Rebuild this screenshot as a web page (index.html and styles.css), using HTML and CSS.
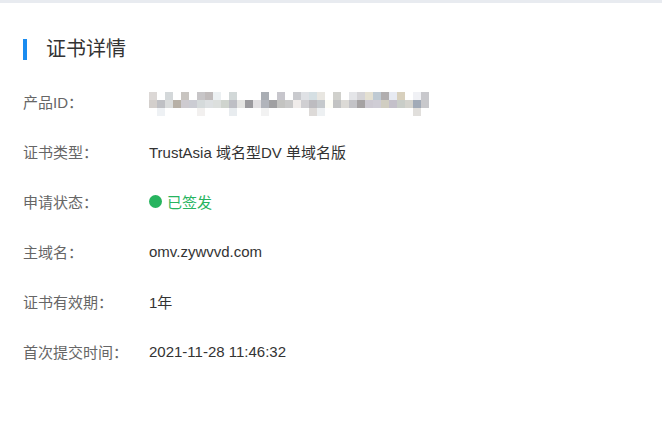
FILE: index.html
```html
<!DOCTYPE html>
<html lang="zh-CN">
<head>
<meta charset="utf-8">
<title>证书详情</title>
<link rel="stylesheet" href="styles.css">
</head>
<body>
<div class="topbar"></div>
<section class="detail">
  <h2 class="title">证书详情</h2>
  <div class="rows">
    <div class="row">
      <span class="label">产品ID：</span>
      <span class="value">
        <svg class="mosaic" width="280" height="24" viewBox="0 0 280 24" aria-label="已打码">
          <g class="r-top">
            <rect x="0" y="0" width="8" height="8" fill="#dcd8d6"/>
            <rect x="16" y="0" width="8" height="8" fill="#d4d8da"/>
            <rect x="32" y="0" width="8" height="8" fill="#c8c4c0"/>
            <rect x="48" y="0" width="8" height="8" fill="#c7c5c7"/>
            <rect x="56" y="0" width="8" height="8" fill="#c0bbbb"/>
            <rect x="64" y="0" width="8" height="8" fill="#ecf0f2"/>
            <rect x="80" y="0" width="8" height="8" fill="#d2d8d8"/>
            <rect x="112" y="0" width="8" height="8" fill="#a9adb3"/>
            <rect x="128" y="0" width="8" height="8" fill="#c7c6cc"/>
            <rect x="144" y="0" width="8" height="8" fill="#c9cace"/>
            <rect x="152" y="0" width="8" height="8" fill="#dfe1e5"/>
            <rect x="160" y="0" width="8" height="8" fill="#d5dfe3"/>
            <rect x="168" y="0" width="8" height="8" fill="#e8e6e1"/>
            <rect x="184" y="0" width="8" height="8" fill="#d0d0cc"/>
            <rect x="200" y="0" width="8" height="8" fill="#e4e5e8"/>
            <rect x="208" y="0" width="8" height="8" fill="#d5d4d7"/>
            <rect x="216" y="0" width="8" height="8" fill="#e4e0d2"/>
            <rect x="224" y="0" width="8" height="8" fill="#bfcad3"/>
            <rect x="232" y="0" width="8" height="8" fill="#b1aeaf"/>
            <rect x="240" y="0" width="8" height="8" fill="#e7eaf2"/>
            <rect x="248" y="0" width="8" height="8" fill="#d8d0bd"/>
            <rect x="264" y="0" width="8" height="8" fill="#f0f1f5"/>
            <rect x="272" y="0" width="8" height="8" fill="#c8c8cc"/>
          </g>
          <g class="r-mid">
            <rect x="0" y="8" width="8" height="8" fill="#d3cfcc"/>
            <rect x="8" y="8" width="8" height="8" fill="#bfc0c4"/>
            <rect x="16" y="8" width="8" height="8" fill="#dadcdc"/>
            <rect x="24" y="8" width="8" height="8" fill="#b7b0a6"/>
            <rect x="32" y="8" width="8" height="8" fill="#cecbd0"/>
            <rect x="40" y="8" width="8" height="8" fill="#cbccd3"/>
            <rect x="48" y="8" width="8" height="8" fill="#d5dadb"/>
            <rect x="56" y="8" width="8" height="8" fill="#dde0e2"/>
            <rect x="64" y="8" width="8" height="8" fill="#dcdfdd"/>
            <rect x="72" y="8" width="8" height="8" fill="#cfd4ce"/>
            <rect x="80" y="8" width="8" height="8" fill="#bebfc5"/>
            <rect x="88" y="8" width="8" height="8" fill="#e4e4e2"/>
            <rect x="96" y="8" width="8" height="8" fill="#9b9a9e"/>
            <rect x="104" y="8" width="8" height="8" fill="#e2e0e2"/>
            <rect x="112" y="8" width="8" height="8" fill="#b1b4bb"/>
            <rect x="120" y="8" width="8" height="8" fill="#a0a0a2"/>
            <rect x="128" y="8" width="8" height="8" fill="#c3c3c1"/>
            <rect x="136" y="8" width="8" height="8" fill="#c9c9c9"/>
            <rect x="144" y="8" width="8" height="8" fill="#f0ecea"/>
            <rect x="152" y="8" width="8" height="8" fill="#d0cfd2"/>
            <rect x="160" y="8" width="8" height="8" fill="#bdbcc0"/>
            <rect x="168" y="8" width="8" height="8" fill="#c5c9cc"/>
            <rect x="176" y="8" width="8" height="8" fill="#fdfdf6"/>
            <rect x="184" y="8" width="8" height="8" fill="#c2c3c3"/>
            <rect x="192" y="8" width="8" height="8" fill="#dcdad6"/>
            <rect x="200" y="8" width="8" height="8" fill="#c3c3c7"/>
            <rect x="208" y="8" width="8" height="8" fill="#a5a2a3"/>
            <rect x="216" y="8" width="8" height="8" fill="#cdcad2"/>
            <rect x="224" y="8" width="8" height="8" fill="#cfcdd5"/>
            <rect x="232" y="8" width="8" height="8" fill="#d0cdc1"/>
            <rect x="240" y="8" width="8" height="8" fill="#c4c0ca"/>
            <rect x="248" y="8" width="8" height="8" fill="#c9cdc8"/>
            <rect x="256" y="8" width="8" height="8" fill="#d4d3cd"/>
            <rect x="264" y="8" width="8" height="8" fill="#a1aab7"/>
            <rect x="272" y="8" width="8" height="8" fill="#c8c8cb"/>
          </g>
          <g class="r-bot">
            <rect x="8" y="16" width="8" height="8" fill="#eef1f4"/>
            <rect x="48" y="16" width="8" height="8" fill="#f2f0ef"/>
            <rect x="80" y="16" width="8" height="8" fill="#e8ecef"/>
            <rect x="112" y="16" width="8" height="8" fill="#f2f2f2"/>
            <rect x="160" y="16" width="8" height="8" fill="#dddad8"/>
            <rect x="168" y="16" width="8" height="8" fill="#edf0f2"/>
            <rect x="264" y="16" width="8" height="8" fill="#e1dfdc"/>
          </g>
        </svg>
      </span>
    </div>
    <div class="row">
      <span class="label">证书类型：</span>
      <span class="value">TrustAsia 域名型DV 单域名版</span>
    </div>
    <div class="row">
      <span class="label">申请状态：</span>
      <span class="value status"><i class="dot"></i>已签发</span>
    </div>
    <div class="row">
      <span class="label">主域名：</span>
      <span class="value">omv.zywvvd.com</span>
    </div>
    <div class="row">
      <span class="label">证书有效期：</span>
      <span class="value">1年</span>
    </div>
    <div class="row">
      <span class="label">首次提交时间：</span>
      <span class="value">2021-11-28 11:46:32</span>
    </div>
  </div>
</section>
</body>
</html>
```
FILE: styles.css
```css
* { box-sizing: border-box; }
html, body {
  margin: 0;
  padding: 0;
  background: #ffffff;
}
body {
  font-family: "Liberation Sans", Arial, "Noto Sans CJK SC", sans-serif;
  font-size: 15px;
  color: #333333;
}
.topbar {
  height: 3px;
  background: #e8ebf0;
}
.detail {
  padding: 36px 0 0 23px;
}
.title {
  margin: 0;
  height: 21px;
  border-left: 4px solid #1a8cf0;
  padding-left: 19px;
  font-size: 20px;
  font-weight: normal;
  line-height: 21px;
  color: #333333;
  display: flex;
  align-items: center;
}
.rows {
  margin-top: 16px;
  display: flex;
  flex-direction: column;
}
.row {
  height: 50px;
  display: flex;
  align-items: center;
}
.label {
  width: 126px;
  flex: none;
  color: #666666;
}
.value {
  color: #333333;
  display: flex;
  align-items: center;
}
.mosaic {
  display: block;
  margin-top: 6px;
}
.status {
  color: #27b45f;
}
.dot {
  display: inline-block;
  width: 13px;
  height: 13px;
  border-radius: 50%;
  background: #27b45f;
  margin-right: 5px;
}
```
